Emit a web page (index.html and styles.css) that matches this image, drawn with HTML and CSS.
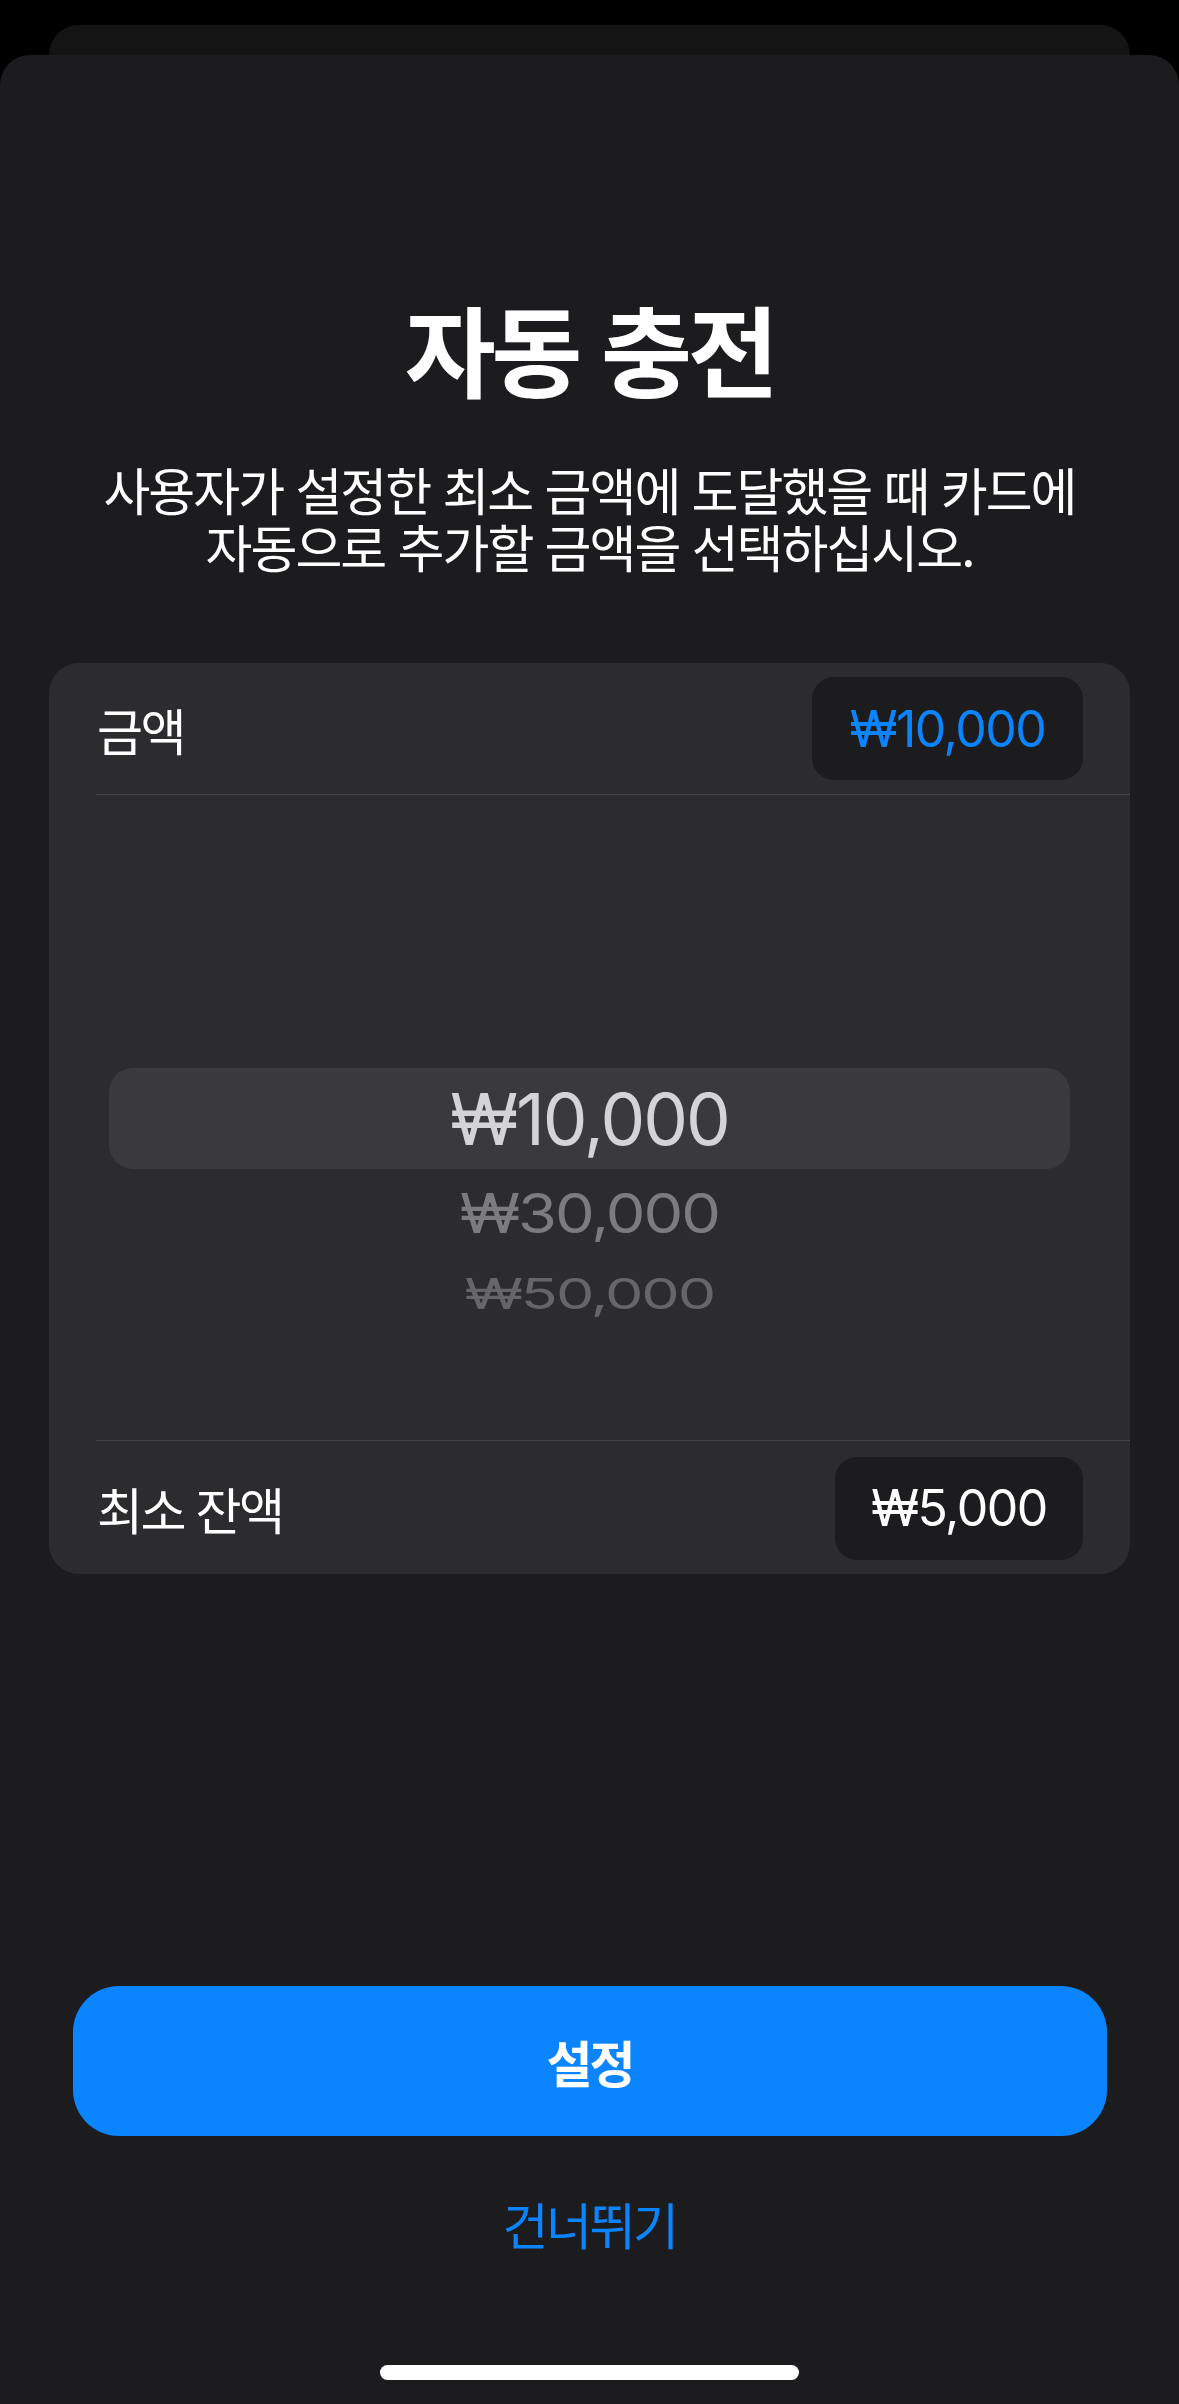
FILE: index.html
```html
<!DOCTYPE html>
<html lang="ko">
<head>
<meta charset="utf-8">
<title>자동 충전</title>
<link rel="stylesheet" href="styles.css">
</head>
<body>
<div class="screen">
  <div class="back-card"></div>
  <div class="sheet">
    <h1 class="title">자동 충전</h1>
    <p class="subtitle">사용자가 설정한 최소 금액에 도달했을 때 카드에<br>자동으로 추가할 금액을 선택하십시오.</p>

    <div class="card">
      <div class="row row-top">
        <span class="row-label">금액</span>
        <span class="pill pill-blue">₩10,000</span>
      </div>
      <div class="picker">
        <div class="pick pick-sel"><span>₩10,000</span></div>
        <div class="pick pick-2"><span>₩30,000</span></div>
        <div class="pick pick-3"><span>₩50,000</span></div>
      </div>
      <div class="row row-bottom">
        <span class="row-label">최소 잔액</span>
        <span class="pill pill-white">₩5,000</span>
      </div>
    </div>

    <div class="spacer"></div>

    <button class="primary">설정</button>
    <button class="skip">건너뛰기</button>
    <div class="home-bar"></div>
  </div>
</div>
</body>
</html>
```

FILE: styles.css
```css
html, body {
  margin: 0;
  padding: 0;
  background: #000;
}
body {
  width: 1179px;
  height: 2404px;
  overflow: hidden;
  font-family: "Noto Sans CJK KR", "Noto Sans", sans-serif;
  color: #fff;
}
.screen {
  padding-top: 25px;
  height: 2404px;
  box-sizing: border-box;
  display: flex;
  flex-direction: column;
}
.back-card {
  height: 30px;
  margin: 0 49px;
  background: #141415;
  border-radius: 30px 30px 0 0;
  flex: none;
}
.sheet {
  flex: 1;
  background: #1c1c1e;
  border-radius: 30px 30px 0 0;
  display: flex;
  flex-direction: column;
  align-items: center;
  padding-top: 232px;
  box-sizing: border-box;
}
.title {
  margin: 0;
  font-size: 99px;
  font-weight: 700;
  line-height: 120px;
  letter-spacing: -4.5px;
  text-align: center;
}
.subtitle {
  margin: 54px 0 0;
  font-size: 51px;
  line-height: 57px;
  letter-spacing: -2px;
  text-align: center;
  font-weight: 400;
}
.card {
  margin-top: 88px;
  width: 1081px;
  background: #2c2c2e;
  border-radius: 30px;
  overflow: hidden;
  align-self: flex-start;
  margin-left: 49px;
}
.row {
  display: flex;
  align-items: center;
  justify-content: space-between;
  padding: 0 47px 0 48px;
  box-sizing: border-box;
}
.row-top {
  height: 131px;
}
.row-bottom {
  height: 133px;
  padding-top: 1px;
}
.row-label {
  font-size: 50px;
  letter-spacing: -2.5px;
}
.pill {
  background: #1c1c1e;
  border-radius: 22px;
  height: 103px;
  display: flex;
  align-items: center;
  justify-content: center;
  font-family: Inter, "Noto Sans", sans-serif;
  font-size: 50px;
  letter-spacing: -1.5px;
  box-sizing: border-box;
}
.pill-blue {
  width: 271px;
  color: #0a84ff;
}
.pill-white {
  width: 248px;
  color: #fff;
}
.picker {
  border-top: 1px solid #444447;
  border-bottom: 1px solid #444447;
  margin-left: 47px;
  height: 647px;
  padding-top: 273px;
  box-sizing: border-box;
  display: flex;
  flex-direction: column;
}
.pick {
  display: flex;
  align-items: center;
  justify-content: center;
  font-family: Inter, "Noto Sans", sans-serif;
  margin-left: -47px;
}
.pick-sel {
  height: 101px;
  margin-left: 13px;
  margin-right: 60px;
  background: #3a3a3c;
  border-radius: 24px;
  color: #d4d4d6;
  font-size: 71px;
  letter-spacing: -2px;
}
.pick-2 {
  height: 88px;
  color: #7c7c80;
  font-size: 63px;
  letter-spacing: -2px;
}
.pick-2 span {
  display: inline-block;
  transform: scaleY(0.86);
}
.pick-3 {
  height: 74px;
  color: #666669;
  font-size: 61px;
  letter-spacing: -2px;
}
.pick-3 span {
  display: inline-block;
  transform: scaleY(0.7);
}
.spacer {
  flex: 1;
}
.primary {
  width: 1034px;
  height: 150px;
  border: 0;
  border-radius: 46px;
  background: #0a84ff;
  color: #fff;
  font-family: "Noto Sans CJK KR", sans-serif;
  font-size: 50px;
  font-weight: 700;
  letter-spacing: -3px;
  flex: none;
}
.skip {
  margin-top: 42px;
  background: none;
  border: 0;
  padding: 0;
  height: 90px;
  color: #0a84ff;
  font-family: "Noto Sans CJK KR", sans-serif;
  font-size: 50px;
  letter-spacing: -2.5px;
  flex: none;
}
.home-bar {
  margin-top: 97px;
  margin-bottom: 24px;
  width: 419px;
  height: 15px;
  border-radius: 8px;
  background: #fff;
  flex: none;
}
```
